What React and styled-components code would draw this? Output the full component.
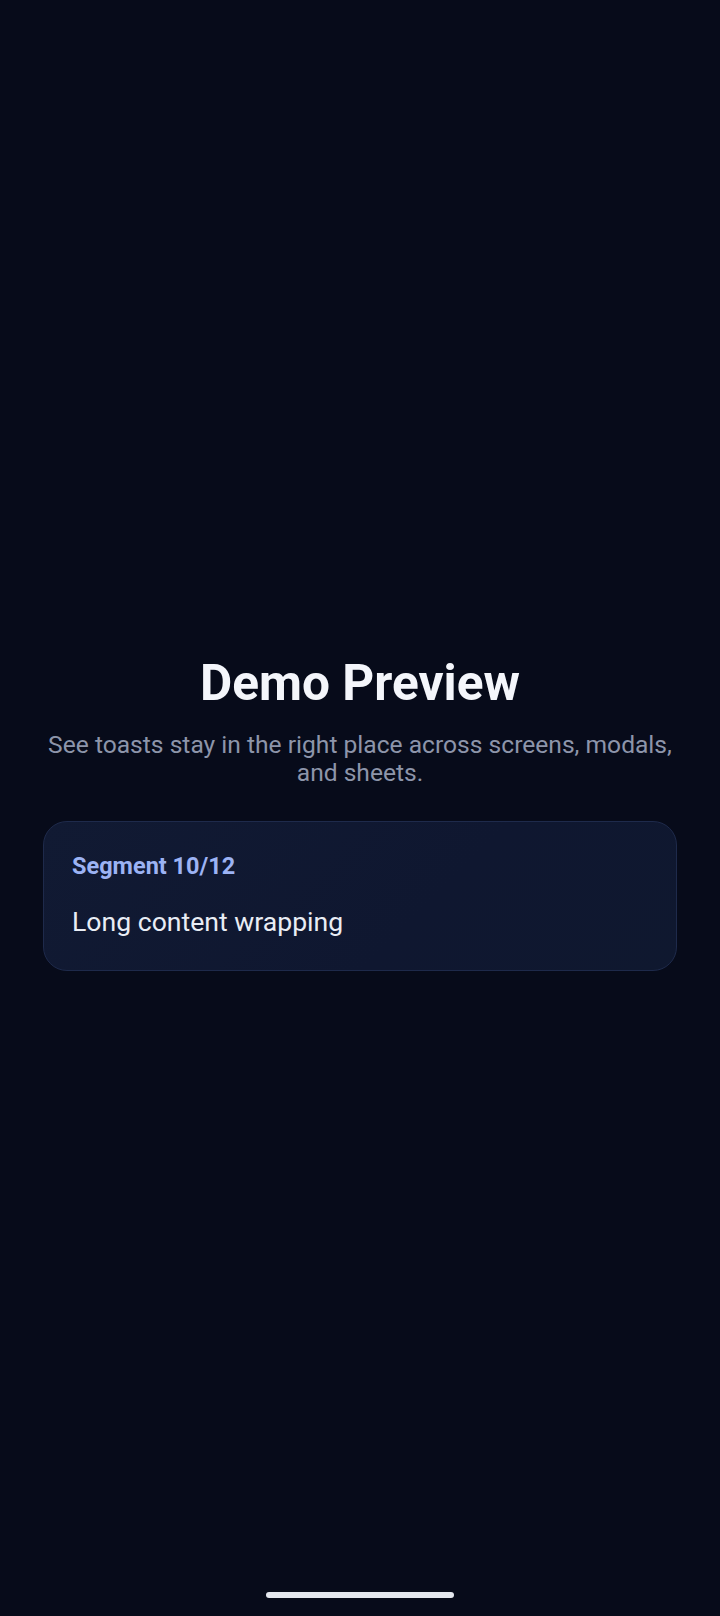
import React from "react";
import styled, { createGlobalStyle } from "styled-components";

const Global = createGlobalStyle`
  html, body {
    margin: 0;
    padding: 0;
    background: #070b1a;
  }
  body {
    font-family: Roboto, "Noto Sans", "Liberation Sans", sans-serif;
    -webkit-font-smoothing: antialiased;
  }
  * { box-sizing: border-box; }
`;

const Screen = styled.main`
  position: relative;
  min-height: 1616px;
  display: flex;
  flex-direction: column;
  justify-content: center;
  padding: 8px 43px 0;
  background: #070b1a;
`;

const Title = styled.h1`
  margin: 0;
  font-size: 49.6px;
  line-height: 60px;
  font-weight: 700;
  color: #f4f6fb;
  text-align: center;
`;

const Subtitle = styled.p`
  margin: 18px 0 0;
  font-size: 24.6px;
  line-height: 28px;
  font-weight: 400;
  color: #8d95aa;
  text-align: center;
`;

const Card = styled.section`
  margin-top: 34px;
  padding: 30px 28px 31px;
  border: 1px solid #1e2a4b;
  border-radius: 24px;
  background: linear-gradient(135deg, #111a33 0%, #0f1730 60%, #0f182f 100%);
`;

const Label = styled.div`
  font-size: 23.5px;
  line-height: 28px;
  font-weight: 700;
  color: #9cb3f4;
`;

const Body = styled.div`
  margin-top: 25px;
  font-size: 26.6px;
  line-height: 34px;
  font-weight: 400;
  color: #e9edf5;
`;

const HomeIndicator = styled.div`
  position: absolute;
  left: 50%;
  bottom: 18px;
  width: 188px;
  height: 6px;
  margin-left: -94px;
  border-radius: 3px;
  background: #e4e7ee;
`;

export default function App() {
  return (
    <>
      <Global />
      <Screen>
        <Title>Demo Preview</Title>
        <Subtitle>
          See toasts stay in the right place across screens, modals, and sheets.
        </Subtitle>
        <Card>
          <Label>Segment 10/12</Label>
          <Body>Long content wrapping</Body>
        </Card>
        <HomeIndicator />
      </Screen>
    </>
  );
}
